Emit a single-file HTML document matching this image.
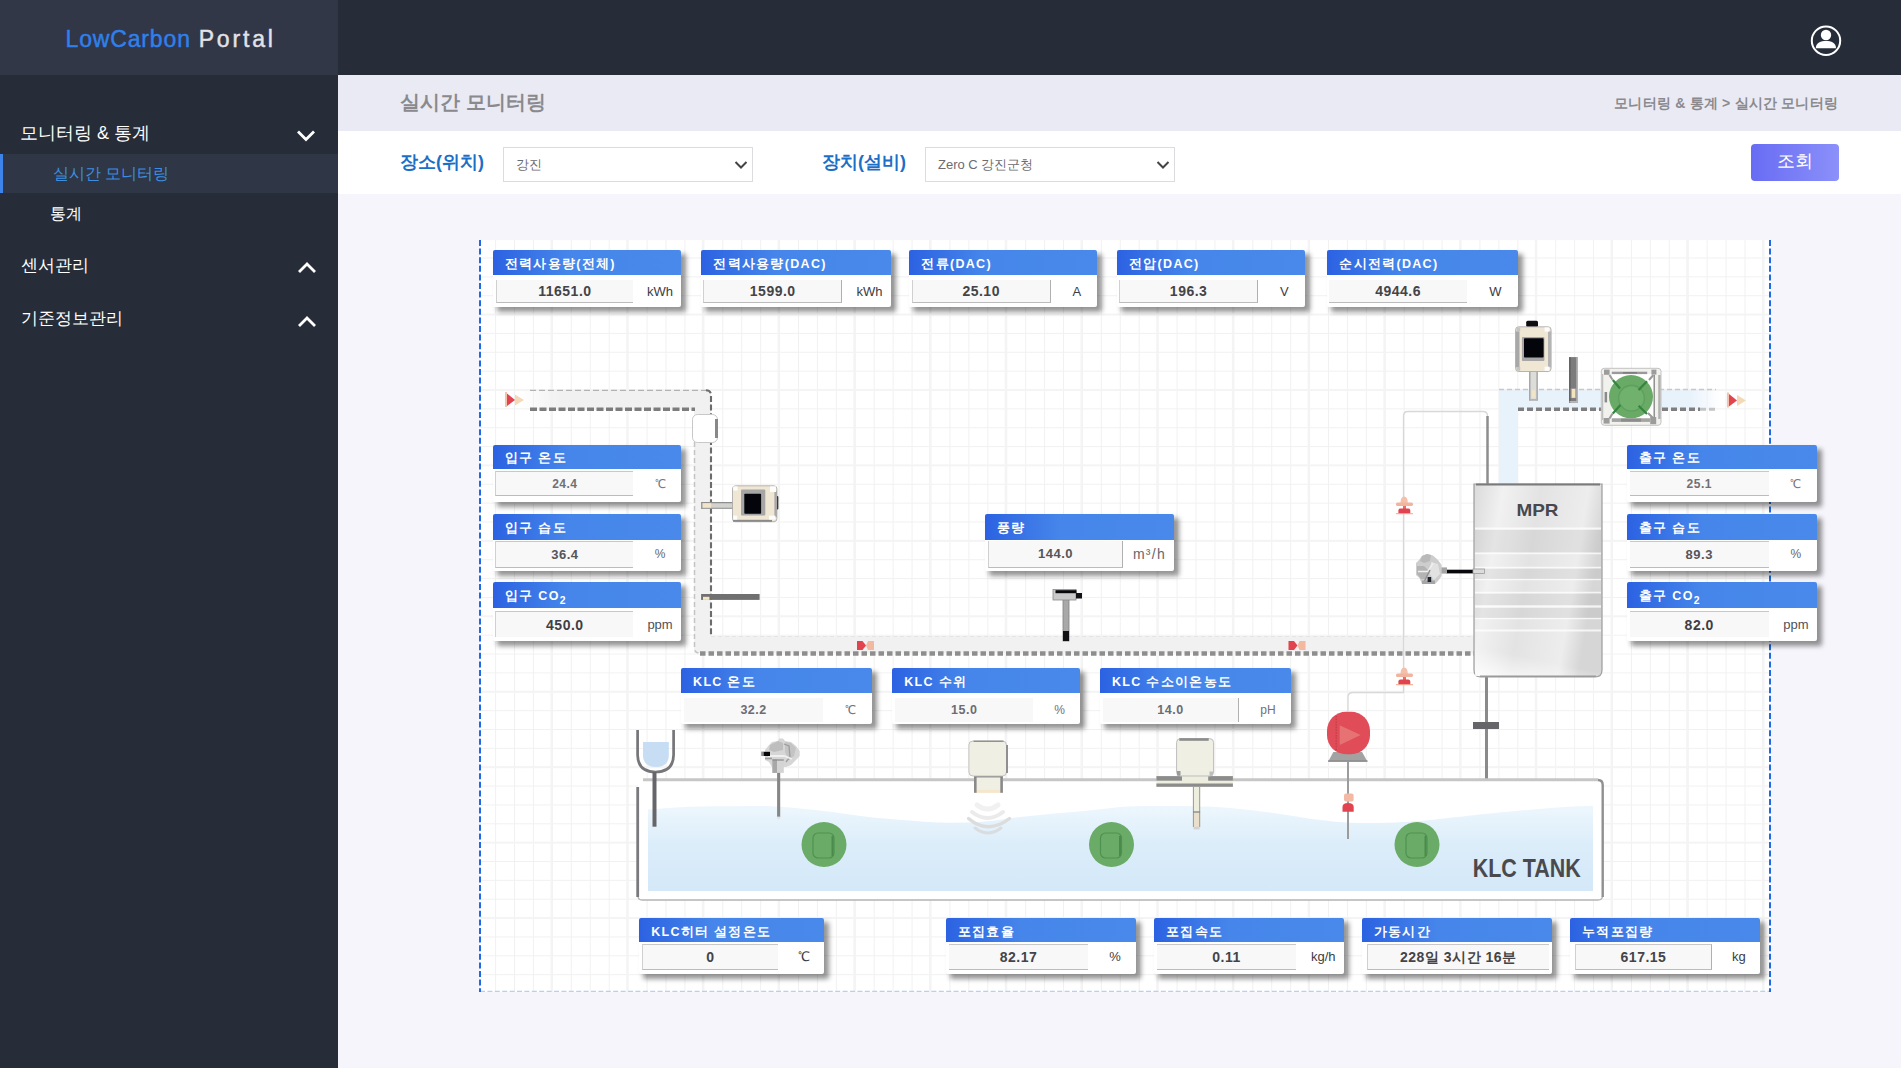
<!DOCTYPE html>
<html lang="ko"><head><meta charset="utf-8"><title>LowCarbon Portal</title>
<style>
*{box-sizing:border-box;margin:0;padding:0}
html,body{width:1901px;height:1068px;overflow:hidden;background:#f5f5fb;font-family:"Liberation Sans",sans-serif;}
.abs{position:absolute}
#side{position:absolute;left:0;top:0;width:338px;height:1068px;background:#262c38}
#logo{position:absolute;left:0;top:0;width:338px;height:75px;background:#313747}
#logo .t{position:absolute;left:65.5px;top:24px;font-size:23px;line-height:30px;letter-spacing:0.85px;color:#2f80ec;white-space:nowrap;-webkit-text-stroke:0.45px #2f80ec}
#logo .t b{font-weight:normal;color:#e2e2e8;letter-spacing:2.85px;margin-left:0.6px;-webkit-text-stroke:0.45px #e2e2e8}
#top{position:absolute;left:338px;top:0;width:1563px;height:75px;background:#262c38}
.mi{position:absolute;left:0;width:338px;color:#fff;font-size:18px;line-height:24px;white-space:nowrap}
.mi span{position:absolute;left:20px;top:0}
.mi svg{position:absolute;left:296px;top:8px}
.mi svg.up{top:7.5px;left:296.6px}
.sub{position:absolute;left:0;width:338px;height:39px;color:#fff;font-size:16px;line-height:39px;padding-left:52px}
.sub.on{background:#2f3645;border-left:3px solid #3d83ea;color:#3d8ee0;padding-left:50px}
#title{position:absolute;left:338px;top:75px;width:1563px;height:56px;background:#eaeaf4}
#title h1{position:absolute;left:62px;top:13px;font-size:20px;line-height:28px;color:#8a8a8e;font-weight:bold;letter-spacing:0}
#title .bc{position:absolute;right:63px;top:18px;font-size:14px;line-height:20px;color:#8a8a8e;font-weight:bold;letter-spacing:0.2px}
#filt{position:absolute;left:338px;top:131px;width:1563px;height:63px;background:#fff}
.lab{position:absolute;top:19px;font-size:18px;line-height:24px;font-weight:bold;color:#1c6fc7;white-space:nowrap}
.sel{position:absolute;top:16px;width:250px;height:35px;border:1px solid #dcdce0;background:#fff;font-size:13px;line-height:33px;color:#6b6b70;padding-left:12px}
.sel svg{position:absolute;right:3px;top:12px}
#btn{position:absolute;left:1413px;top:13px;width:88px;height:37px;border-radius:4px;background:linear-gradient(90deg,#686cf3,#8b90fa);color:#fff;font-size:18px;line-height:34px;text-align:center}
#dia{position:absolute;left:480px;top:240px;width:1291px;height:752px;background:#fff;overflow:hidden}
.card{position:absolute;background:#fff;border-radius:2px;box-shadow:4.5px 4.5px 5px rgba(0,0,0,.42)}
.card .h{position:absolute;left:0;top:0;right:0;background:linear-gradient(90deg,#2c62e2,#4686ea 40%,#4889ea);color:#fff;font-size:12.5px;letter-spacing:1.3px;font-weight:bold;padding-left:12px;white-space:nowrap;border-radius:2px 2px 0 0;overflow:hidden}
.card .v{position:absolute;background:#f8f8f8;font-size:14px;font-weight:bold;color:#46464a;text-align:center;letter-spacing:0.5px}
.card .u{position:absolute;font-size:13px;color:#3c3c44;text-align:center;padding-left:5px}
</style></head><body>
<div id="side">
 <div id="logo"><div class="t">LowCarbon <b>Portal</b></div></div>
 <div class="mi" style="top:121px"><span>모니터링 &amp; 통계</span><svg width="20" height="14" viewBox="0 0 20 14"><path d="M2 2.5 L10 10.5 L18 2.5" fill="none" stroke="#fff" stroke-width="2.8"/></svg></div>
 <div class="sub on" style="top:154px">실시간 모니터링</div>
 <div class="sub" style="top:194px;padding-left:50px">통계</div>
 <div class="mi" style="top:253px;font-size:17.4px"><span style="left:20.6px">센서관리</span><svg class="up" width="20" height="14" viewBox="0 0 20 14"><path d="M2 11 L10 3 L18 11" fill="none" stroke="#fff" stroke-width="2.8"/></svg></div>
 <div class="mi" style="top:306px;font-size:17.4px"><span style="left:20.6px">기준정보관리</span><svg class="up" style="top:9px" width="20" height="14" viewBox="0 0 20 14"><path d="M2 11 L10 3 L18 11" fill="none" stroke="#fff" stroke-width="2.8"/></svg></div>
</div>
<div id="top">
 <svg class="abs" style="left:1471px;top:23px" width="34" height="34" viewBox="0 0 34 34"><circle cx="17" cy="17.7" r="14.2" fill="none" stroke="#fff" stroke-width="2"/><circle cx="17" cy="12" r="5.2" fill="#fff"/><path d="M6.8 25.3 C6.8 19.5 12 18 17 18 C22 18 27 19.5 27 25.3 Z" fill="#fff"/></svg>
</div>
<div id="title"><h1>실시간 모니터링</h1><div class="bc">모니터링 &amp; 통계 &gt; 실시간 모니터링</div></div>
<div id="filt">
 <div class="lab" style="left:62px">장소(위치)</div>
 <div class="sel" style="left:165px">강진<svg width="16" height="10" viewBox="0 0 16 10"><path d="M2.5 2 L8 7.5 L13.5 2" fill="none" stroke="#444" stroke-width="2"/></svg></div>
 <div class="lab" style="left:484px">장치(설비)</div>
 <div class="sel" style="left:587px">Zero C 강진군청<svg width="16" height="10" viewBox="0 0 16 10"><path d="M2.5 2 L8 7.5 L13.5 2" fill="none" stroke="#444" stroke-width="2"/></svg></div>
 <div id="btn">조회</div>
</div>
<div id="dia"></div>
<svg class="abs" style="left:0;top:0" width="1901" height="1068" viewBox="0 0 1901 1068">
<defs>
 <pattern id="gmin" x="476.17" y="238.62" width="18.93" height="18.86" patternUnits="userSpaceOnUse"><path d="M0.5 0 V18.95 M0 0.5 H18.95" stroke="#f1f1f1" stroke-width="1" fill="none"/></pattern>
 <pattern id="gmaj" x="474.7" y="238.1" width="75.72" height="75.44" patternUnits="userSpaceOnUse"><path d="M1 0 V75.8 M0 1 H75.8" stroke="#f4f4f4" stroke-width="2" fill="none"/></pattern>
 <linearGradient id="mprg" x1="0" y1="0" x2="1" y2="0.25"><stop offset="0" stop-color="#dadada"/><stop offset="0.22" stop-color="#f1f1f1"/><stop offset="0.5" stop-color="#e3e3e3"/><stop offset="0.85" stop-color="#ededed"/><stop offset="1" stop-color="#d6d6d6"/></linearGradient><linearGradient id="mprb" x1="0" y1="1" x2="0.6" y2="0"><stop offset="0" stop-color="#fff" stop-opacity="0.85"/><stop offset="0.5" stop-color="#fff" stop-opacity="0"/></linearGradient>
 <linearGradient id="water" x1="0" y1="0" x2="0" y2="1"><stop offset="0" stop-color="#edf7fd"/><stop offset="0.45" stop-color="#dcedfa"/><stop offset="1" stop-color="#d4e8f8"/></linearGradient>
 <linearGradient id="fadeL" x1="0" y1="0" x2="1" y2="0"><stop offset="0" stop-color="#f1f1f1" stop-opacity="0"/><stop offset="1" stop-color="#f1f1f1"/></linearGradient>
 <linearGradient id="fadeR" x1="0" y1="0" x2="1" y2="0"><stop offset="0" stop-color="#e8f2fb"/><stop offset="1" stop-color="#e8f2fb" stop-opacity="0"/></linearGradient>
 <clipPath id="dclip"><rect x="480" y="240" width="1291" height="752"/></clipPath>
</defs>
<g id="grid">
 <rect x="480" y="240" width="1291" height="752" fill="#fff"/>
 <rect x="480" y="240" width="1291" height="752" fill="url(#gmin)"/>
 <rect x="480" y="240" width="1291" height="752" fill="url(#gmaj)"/>
 <path d="M480 991.4 H1771" stroke="#aed3f6" stroke-width="1.3" stroke-dasharray="5 2.4" fill="none"/>
 <path d="M480 240 V992 M1770 240 V992" stroke="#1f68e6" stroke-width="2" stroke-dasharray="6 2.6" fill="none"/>
</g>

<!-- inlet duct -->
<g id="inlet">
 <rect x="520" y="390" width="40" height="20" fill="url(#fadeL)"/>
 <path d="M560 390 H711 V636 H1474 V653 H694 V410 H560 Z" fill="#f1f1f1"/>
 <path d="M530 390.3 H706" fill="none" stroke="#b2b2b2" stroke-width="1.3" stroke-dasharray="6 3"/><path d="M706 390.3 Q711 390.5 711 395 V636" fill="none" stroke="#6c6c6c" stroke-width="2.1" stroke-dasharray="6 2.6"/>
 <path d="M711 636.5 H1474" fill="none" stroke="#e4e4e4" stroke-width="1" stroke-dasharray="4 3"/>
 <path d="M530 409.3 H695" fill="none" stroke="#7c7c7c" stroke-width="3.6" stroke-dasharray="7 2.5"/>
 <path d="M694.5 442 V648 Q694.5 653 700 653" fill="none" stroke="#c4c4c4" stroke-width="1.5" stroke-dasharray="5 3"/>
 <path d="M700 653.5 H1474" fill="none" stroke="#8e8e8e" stroke-width="4.6" stroke-dasharray="5.5 3"/>
 <!-- filter box -->
 <rect x="692.5" y="414.5" width="25" height="28" rx="5" fill="#fff" stroke="#c8c8c8" stroke-width="1"/>
 <path d="M716.5 419 V438" stroke="#888" stroke-width="3" fill="none"/>
 <!-- arrows -->
 <g id="arr1"><rect x="505" y="392" width="2" height="15" fill="#f3c3ae"/><path d="M507 393.5 L515 400 L507 406 Z" fill="#e2444f"/><path d="M515 394.5 L524 400 L515 405.5 Z" fill="#f4d9b9"/></g><g id="arr2"><path d="M857 641 H862.5 L866 645.5 L862.5 650 H857 Z" fill="#e2444f"/><path d="M866 645.5 L868 641 H874 V650 H868 Z" fill="#f2b8a0"/></g>
 <use href="#arr2" x="431.5" y="0"/>
</g>

<!-- outlet duct -->
<g id="outlet">
 <path d="M1499 389 H1690 V410 H1518 V484 H1499 Z" fill="#e8f2fb"/>
 <rect x="1690" y="389" width="30" height="21" fill="url(#fadeR)"/>
 <path d="M1499 389.5 H1716" fill="none" stroke="#c8c8c8" stroke-width="1.5" stroke-dasharray="5 3"/>
 <path d="M1518 409.3 H1700" fill="none" stroke="#7e7e7e" stroke-width="3.4" stroke-dasharray="6 3"/><path d="M1700 409.3 H1716" fill="none" stroke="#c4c4c4" stroke-width="3" stroke-dasharray="6 3"/>
 <use href="#arr1" x="1222" y="0.5"/>
</g>

<!-- thin pipes -->
<g id="pipes" fill="none">
 <path d="M1348 711 V697 Q1348 692.5 1353 692.5 H1403.5 V416 Q1403.5 411.5 1408 411.5 H1483 Q1487.5 411.5 1487.5 416" stroke="#d8d8d8" stroke-width="1.3"/>
 <path d="M1487.5 416 V484" stroke="#8e8e8e" stroke-width="2.5"/>
 <path d="M1486.5 677 V780" stroke="#8a8a8a" stroke-width="3"/>
 <rect x="1473" y="722" width="26" height="7" fill="#66666a" stroke="none"/>
</g>

<!-- MPR -->
<g id="mpr">
 <path d="M1474 484 H1602 V670 Q1602 677 1595 677 H1481 Q1474 677 1474 670 Z" fill="url(#mprg)" stroke="#9c9c9c" stroke-width="1.2"/>
 <rect x="1475" y="632" width="126" height="44" fill="url(#mprb)"/>
 <path d="M1476 484.5 H1600" stroke="#7a7a7a" stroke-width="2"/>
 <path d="M1480 676.3 H1596" stroke="#9a9a9a" stroke-width="1.6"/>
 <g stroke="#fff" stroke-opacity="0.75">
  <path d="M1475 528.5 H1601" stroke-width="2"/>
  <path d="M1475 553.5 H1601" stroke-width="1.5"/>
  <path d="M1475 567.5 H1601" stroke-width="1.5"/>
  <path d="M1475 579.5 H1601" stroke-width="1.5"/>
  <path d="M1475 592.5 H1601" stroke-width="1.5"/>
  <path d="M1475 606.5 H1601" stroke-width="2"/>
  <path d="M1475 618.5 H1601" stroke-width="1.5"/>
  <path d="M1475 630.5 H1601" stroke-width="2"/>
 </g>
 <g fill="#000" fill-opacity="0.05">
  <rect x="1475" y="530" width="126" height="22"/>
  <rect x="1475" y="569" width="126" height="10"/>
  <rect x="1475" y="594" width="126" height="11"/>
  <rect x="1475" y="608" width="126" height="10"/>
 </g>
 <text x="1537.5" y="515.5" font-family="Liberation Sans, sans-serif" font-weight="bold" font-size="17" fill="#48484c" text-anchor="middle" textLength="42" lengthAdjust="spacingAndGlyphs">MPR</text>
</g>

<!-- tank -->
<g id="tank">
 <rect x="638" y="780" width="964.5" height="120" rx="4" fill="#fff"/>
 <path d="M643 779.7 H1598" stroke="#c6c6c6" stroke-width="3" fill="none"/>
 <path d="M638 896 Q638 900 642 900 H1598 Q1602.5 900 1602.5 896" stroke="#b4b4b4" stroke-width="1.3" fill="none"/>
 <path d="M637.7 787 V897" stroke="#7a7a7e" stroke-width="2.8" fill="none"/>
 <path d="M1598 780 Q1602.7 780 1602.7 785 V897" stroke="#909090" stroke-width="2.4" fill="none"/>
 <path d="M648 809.5 C654.2 809.1 673.0 807.5 685 807 C697.0 806.5 705.7 806.4 720 806.3 C734.3 806.2 754.3 805.6 771 806.3 C787.7 807.0 803.7 808.7 820 810.5 C836.3 812.3 853.2 815.2 869 817 C884.8 818.8 901.5 820.0 915 821 C928.5 822.0 938.3 822.7 950 822.8 C961.7 822.9 973.3 822.5 985 821.5 C996.7 820.5 1008.3 818.3 1020 817 C1031.7 815.7 1043.2 814.6 1055 813.5 C1066.8 812.4 1079.0 811.4 1091 810.2 C1103.0 809.1 1114.7 807.3 1127 806.6 C1139.3 805.9 1151.7 806.0 1165 806 C1178.3 806.0 1194.5 806.1 1207 806.6 C1219.5 807.1 1229.5 808.0 1240 809 C1250.5 810.0 1261.7 811.4 1270 812.5 C1278.3 813.6 1281.7 814.2 1290 815.5 C1298.3 816.8 1309.8 818.8 1320 820 C1330.2 821.2 1339.8 822.3 1351 822.8 C1362.2 823.3 1375.5 823.1 1387 822.8 C1398.5 822.5 1409.8 821.8 1420 821 C1430.2 820.2 1436.3 819.2 1448 818 C1459.7 816.8 1475.8 814.9 1490 813.5 C1504.2 812.1 1520.5 810.5 1533 809.4 C1545.5 808.3 1555.0 807.6 1565 807 C1575.0 806.4 1588.3 806.0 1593 805.8 V891 H648 Z" fill="url(#water)"/>
 <text x="1526.7" y="877" font-family="Liberation Sans, sans-serif" font-weight="bold" font-size="26" fill="#4a4a4e" text-anchor="middle" textLength="108" lengthAdjust="spacingAndGlyphs">KLC TANK</text>
</g>

<path d="M1348 762 V839" stroke="#9c9c9c" stroke-width="2" fill="none"/>
<!-- green fans in tank -->
<g id="greens">
 <g id="gc"><circle cx="824" cy="844.5" r="22.5" fill="#6aab68"/><rect x="813" y="833" width="21" height="25" rx="5" fill="none" stroke="#4f9150" stroke-width="1.2"/><path d="M832.5 836 V856" stroke="#4a8a4c" stroke-width="2"/></g>
 <use href="#gc" x="287.5" y="0"/>
 <use href="#gc" x="593" y="0"/>
</g>

<!-- big fan outlet -->
<g id="fan">
 <rect x="1601.3" y="368.3" width="59.7" height="57" rx="3" fill="#f1f1ed" stroke="#bcbcbc" stroke-width="0.9"/>
 <rect x="1611.8" y="374" width="41.6" height="44.3" fill="#fff"/>
 <rect x="1611.8" y="371.7" width="35.4" height="2.4" fill="#9a9a9a"/>
 <rect x="1623" y="372" width="14" height="1.6" fill="#7e7e7e"/>
 <rect x="1611.8" y="418.3" width="38.2" height="3.6" fill="#a4a4a4"/>
 <rect x="1621" y="418.6" width="20" height="3" fill="#8c8c8c"/>
 <rect x="1602.2" y="374" width="1" height="46" fill="#b4b4b4"/>
 <rect x="1604.6" y="392" width="2.5" height="10.4" fill="#8a8a8a"/>
 <rect x="1653.6" y="375" width="1.2" height="44" fill="#7c7c7c"/>
 <rect x="1658.2" y="375" width="2.4" height="44" fill="#b2b2b2"/>
 <rect x="1604" y="369.6" width="5.6" height="5.2" fill="#9c9c9c"/><rect x="1651.4" y="369.6" width="5" height="5" fill="#9c9c9c"/>
 <rect x="1603.6" y="418" width="6" height="5.6" fill="#9c9c9c"/><rect x="1650.2" y="417" width="6" height="7.2" fill="#9c9c9c"/>
 <path d="M1609.5 375 L1612.6 379.7 M1653.4 375 L1649 380 M1609.5 418.6 L1612.6 413.4 M1653 418 L1648 413" stroke="#9a9a9a" stroke-width="2"/>
 <ellipse cx="1631" cy="396.7" rx="22" ry="21.6" fill="#69aa67"/>
 <circle cx="1631.5" cy="398.2" r="13.6" fill="#5fa05e"/>
 <circle cx="1631.5" cy="398.3" r="12.1" fill="#6fb16d"/>
 <path d="M1612.8 380 L1620 388.4 M1638.6 390 L1647 381.2 M1612.8 413.4 L1620.4 405 M1638.6 405.8 L1647 414" stroke="#35853f" stroke-width="2.3"/>
</g>

<!-- outlet sensor (vertical) -->
<g id="sens1">
 <rect x="1526.2" y="320.7" width="11.8" height="6.3" rx="1.5" fill="#0e0e12"/>
 <rect x="1529.2" y="371" width="8.5" height="29.7" fill="#dcdcd8"/>
 <path d="M1529.8 371 V400.7 M1537.1 371 V400.7" stroke="#9a9a9a" stroke-width="1.2" fill="none"/>
 <rect x="1531.8" y="390.3" width="3.6" height="7.5" fill="#f1e4c8"/>
 <rect x="1530" y="399" width="7" height="1.8" fill="#b4b4b4"/>
 <rect x="1515.6" y="326.8" width="35.5" height="44.7" rx="3" fill="#efe6d4" stroke="#a4a4a4" stroke-width="0.8"/>
 <rect x="1515.6" y="331.3" width="3.9" height="36" fill="#a8a8a8"/>
 <rect x="1548" y="331.3" width="3.1" height="36" fill="#b4b4b4"/>
 <rect x="1544.6" y="327.4" width="4.8" height="4.2" fill="#fdfdfd"/><rect x="1544.6" y="366.6" width="4.8" height="4.2" fill="#fdfdfd"/>
 <rect x="1516.6" y="327.4" width="3.6" height="3.8" fill="#c4c4c4"/><rect x="1516.6" y="367" width="3.6" height="3.8" fill="#c4c4c4"/>
 <rect x="1521.9" y="337" width="22.5" height="24" rx="1" fill="#a6a6a6"/>
 <rect x="1524" y="338.2" width="19.6" height="19.4" rx="0.8" fill="#03050b"/>
</g>
<!-- outlet probe -->
<g id="probe1">
 <rect x="1569.1" y="357.1" width="8.9" height="45.6" fill="#7c7c7c"/>
 <rect x="1569.1" y="357.1" width="1.6" height="45.6" fill="#626262"/>
 <rect x="1576.3" y="357.1" width="1.7" height="45.6" fill="#b2b2b2"/>
 <rect x="1570.7" y="388.5" width="5.6" height="9.6" fill="#a8a8a8"/>
 <rect x="1571.9" y="388.9" width="3.2" height="8.9" fill="#f5e3bc"/>
 <rect x="1569.6" y="401" width="8" height="1.7" fill="#b8b8b8"/>
</g>

<!-- inlet sensor (horizontal) -->
<g id="sens2">
 <rect x="701.2" y="502.2" width="32" height="6.5" fill="#d2d2ce"/>
 <path d="M701.2 502.6 H733 M701.2 508.2 H733" stroke="#8e8e8e" stroke-width="1.1" fill="none"/>
 <rect x="701.6" y="503.2" width="9.5" height="4.4" fill="#f1e4c8"/>
 <rect x="701.2" y="502.2" width="1.2" height="6.5" fill="#8e8e8e"/>
 <rect x="776" y="496" width="2.3" height="13.5" rx="1" fill="#0e0e12"/>
 <rect x="732.5" y="485.8" width="44.4" height="35.9" rx="3" fill="#efe6d4" stroke="#a4a4a4" stroke-width="0.8"/>
 <rect x="733" y="519.8" width="39" height="2" fill="#8a8a8a"/>
 <rect x="774.4" y="491" width="2.5" height="26" fill="#a8a8a8"/>
 <rect x="733.2" y="486.4" width="4.4" height="4.2" fill="#fdfdfd"/><rect x="770" y="486.4" width="6" height="5.6" fill="#fdfdfd"/>
 <rect x="733.2" y="515.6" width="4" height="4" fill="#fdfdfd"/><rect x="769" y="515.6" width="6.4" height="4" fill="#fdfdfd"/>
 <rect x="741" y="489.4" width="24.3" height="26.2" rx="1" fill="#a6a6a6"/>
 <rect x="744.3" y="493.7" width="16.8" height="20.1" rx="0.8" fill="#03050b"/>
</g>
<!-- inlet probe horizontal -->
<g id="probe2">
 <rect x="701.1" y="594" width="58.5" height="5.9" fill="#707070"/>
 <rect x="703" y="596.8" width="6.4" height="3.1" fill="#f3e3c0"/>
</g>

<!-- flow meter -->
<g id="flow">
 <rect x="1063" y="599" width="6" height="42" fill="#a8a8a8" stroke="#808080" stroke-width="0.8"/>
 <rect x="1063" y="631" width="6" height="10" fill="#121216"/>
 <rect x="1053" y="589.5" width="23" height="10.5" fill="#c9c9c9" stroke="#8a8a8a" stroke-width="0.8"/>
 <rect x="1055.5" y="590.2" width="21" height="3" fill="#08080c"/>
 <rect x="1076" y="593" width="6" height="5.5" fill="#121216"/>
</g>

<!-- MPR thermometer -->
<g id="therm1">
 <rect x="1446.5" y="569.7" width="27" height="3.7" fill="#08080c"/>
 <rect x="1473" y="569" width="11.6" height="4.6" fill="#dcdcdc" stroke="#9c9c9c" stroke-width="0.8"/>
 <rect x="1440.5" y="567.4" width="6.5" height="6.2" fill="#a4a4a4"/>
 <path d="M1422 556 L1427 554 L1433 555.5 L1438 560 L1441.6 565 L1441.6 576 L1438 581 L1435 584 L1422 584 L1419.5 578 L1416 575 L1416 563 L1419 560 Z" fill="#cdcdcd"/>
 <path d="M1422 556 L1427 554 L1431 555 L1430 561 L1424 563 L1420 561 Z" fill="#b9b9b9"/>
 <path d="M1431 562 L1438 564 L1440 574 L1434 580 L1430 574 Z" fill="#e2e2e2"/>
 <path d="M1417 566 L1424 566 L1429 571 L1426 579 L1421 579 L1417 574 Z" fill="#b4b4b4"/>
 <path d="M1418 571.5 H1428 L1433 563" stroke="#eeeeee" stroke-width="1.6" fill="none"/>
 <path d="M1424 582 L1430 570" stroke="#8f8f8f" stroke-width="1.4" fill="none"/>
 <rect x="1422" y="580.5" width="13" height="3.5" fill="#a6a6a6"/>
 <rect x="1427.6" y="577" width="3.6" height="5" fill="#1e2430"/>
</g>

<!-- tank thermometer -->
<g id="therm2">
 <rect x="777.1" y="772" width="3.1" height="45" fill="#868686"/>
 <rect x="777.1" y="816.6" width="3.1" height="2.6" fill="#e4e4e4"/>
 <path d="M765 750 L769 745 L772 742 L778 741 L779 738.5 L783 738.5 L785 741 L791 742 L796 746 L799.7 751 L799.7 756 L796 760 L791 765 L786 767 L772 767 L769 762 L765 760 Z" fill="#d6d6d6"/>
 <path d="M770 745 L778 741 L783 743 L783 750 L774 752 L769 750 Z" fill="#bebebe"/>
 <path d="M785 742 L791 743 L796 748 L794 756 L789 760 L785 752 Z" fill="#c4c4c4"/>
 <path d="M784 744 L789 746 L790 757 L786 762" stroke="#9c9c9c" stroke-width="1.3" fill="none"/>
 <path d="M768 756 H784 L792 759" stroke="#f0f0f0" stroke-width="1.8" fill="none"/>
 <path d="M765 758.5 H772" stroke="#9a9a9a" stroke-width="1.6" fill="none"/>
 <rect x="761.2" y="751.6" width="3" height="4.4" fill="#8c8c8c"/>
 <rect x="763.8" y="751.8" width="6.2" height="4.2" fill="#06060a"/>
 <rect x="772.4" y="759.5" width="11.4" height="13.4" fill="#d4d4d4"/>
 <rect x="772.4" y="759.5" width="4.6" height="13.4" fill="#a8a8a8"/>
 <path d="M772.4 760 H783.8" stroke="#8a8a8a" stroke-width="1.2"/>
</g>

<!-- funnel -->
<g id="funnel">
 <path d="M643 742 H668.8 V755 Q668.8 766.8 656 767 Q643 766.8 643 755 Z" fill="#c6ddf3"/>
 <path d="M637.6 730 V755 Q638 772 655.5 772 Q673.2 772 673.6 755 V730" fill="none" stroke="#76767a" stroke-width="2.7"/>
 <path d="M654.5 772 V826.7" stroke="#66666a" stroke-width="4" fill="none"/>
</g>

<!-- level sensor -->
<g id="level">
 <rect x="974" y="775.5" width="28.9" height="17.3" fill="#f0efe4"/>
 <rect x="976" y="789.8" width="25" height="3" fill="#f5e6cc"/>
 <rect x="974" y="775.8" width="2.6" height="17" fill="#8a8a8a"/><rect x="1000.3" y="775.8" width="2.6" height="17" fill="#8a8a8a"/>
 <rect x="974" y="775.6" width="28.9" height="1.8" fill="#7e7e7e"/>
 <rect x="968.9" y="741" width="37.6" height="35" rx="4" fill="#f0efe4" stroke="#c2c2c2" stroke-width="1"/>
 <rect x="973.5" y="740.6" width="30" height="1.3" fill="#8a8a8a"/>
 <rect x="1006" y="745" width="2" height="28" fill="#909090"/>
 <g fill="none" stroke-linecap="round">
  <path d="M977 805 Q987.5 813 998 805" stroke="#f1f1f1" stroke-width="5"/>
  <path d="M972 812 Q987.5 824 1003 812" stroke="#ebebeb" stroke-width="4"/>
  <path d="M968.5 818.5 Q988 835 1009.5 818.5" stroke="#dcdcdc" stroke-width="3.4"/>
  <path d="M975 828 Q988 838 1001 828" stroke="#dadde0" stroke-width="3"/>
 </g>
</g>

<!-- pH sensor -->
<g id="ph">
 <rect x="1193" y="786" width="7.1" height="41" fill="#eeeedf"/>
 <rect x="1193" y="812.5" width="7.1" height="14.5" fill="#e9dfcb"/>
 <path d="M1193.4 786 V827 M1199.7 786 V827" stroke="#8e8e8e" stroke-width="0.9" fill="none"/>
 <path d="M1193 812 H1200.1" stroke="#8a8a8a" stroke-width="1.4"/>
 <rect x="1193.6" y="826.8" width="6" height="2.6" fill="#d2d2d2"/>
 <rect x="1156.4" y="776.1" width="76.5" height="10.7" fill="#eeeedf"/>
 <rect x="1156.4" y="776.1" width="25.6" height="4.6" fill="#8c8c8c"/>
 <rect x="1208.2" y="776.1" width="24.7" height="4.6" fill="#8c8c8c"/>
 <rect x="1156.4" y="783.5" width="76.5" height="3.3" fill="#8c8c8c"/>
 <rect x="1176.6" y="738.6" width="37" height="37.4" rx="4" fill="#f0efe4" stroke="#bdbdbd" stroke-width="1"/>
 <rect x="1179.3" y="738.2" width="29.4" height="2.6" fill="#8c8c8c"/>
 <rect x="1177" y="771" width="3.5" height="4.6" fill="#9a9a9a"/><rect x="1209.5" y="771.5" width="3.5" height="4" fill="#bdbdbd"/>
</g>

<!-- red pump -->
<g id="pump">
 <path d="M1333.3 752 H1362.1 L1367.5 761.8 H1328.1 Z" fill="#a2a2a2"/>
 <path d="M1328.1 761 H1367.5" stroke="#8c8c8c" stroke-width="1.6"/>
 <rect x="1327" y="711.8" width="43" height="42.4" rx="19" fill="#e04c57"/>
 <path d="M1336.2 716 V751" stroke="#c23c48" stroke-width="1.2" stroke-dasharray="1.5 1.2"/>
 <path d="M1339.7 725.3 L1360.7 735.1 L1339.7 745 Z" fill="#f3b0a4" fill-opacity="0.38"/>
</g>

<!-- red alarm icons -->
<g id="alarm1"><path d="M1400.5 503 Q1400.5 496.5 1404.2 496.5 Q1407.8 496.5 1407.8 503 Z" fill="#f4c0aa"/><rect x="1396" y="502.5" width="17" height="3.6" rx="1.6" fill="#f2b49e"/><rect x="1403" y="506" width="3" height="3" fill="#ea6a66"/><path d="M1398.4 513.4 V510.5 Q1398.4 508.6 1400.5 508.6 H1408.2 Q1410.3 508.6 1410.3 510.5 V513.4 Z" fill="#e2444f"/><rect x="1396" y="513.2" width="17" height="1" fill="#f1a58a"/></g>
<use href="#alarm1" x="0" y="171"/>
<g id="alarm3"><rect x="1344" y="793.4" width="9.6" height="8" rx="2" fill="#f3b9a4"/><path d="M1342.5 811.8 V807 Q1342.5 803 1348 803 Q1353.7 803 1353.7 807 V811.8 Z" fill="#e2444f"/></g>
</svg>

<div class="card" style="left:492.8px;top:250.0px;width:188.2px;height:57.1px"><div class="h" style="height:24.5px;line-height:28.5px">전력사용량(전체)</div><div class="v" style="left:2.8px;top:29.6px;width:137.6px;height:23.6px;line-height:23.6px;font-size:14px;color:#444448;border-left:1px solid #d0d0d0;border-bottom:1.5px solid #bcbcbc;">11651.0</div><div class="u" style="left:141.4px;top:29.6px;width:46.8px;height:23.6px;line-height:24.6px;font-size:13px;color:#3c3c44">kWh</div></div><div class="card" style="left:701.3px;top:250.0px;width:189.5px;height:57.1px"><div class="h" style="height:24.5px;line-height:28.5px">전력사용량(DAC)</div><div class="v" style="left:2.1px;top:29.6px;width:138.7px;height:23.6px;line-height:23.6px;font-size:14px;color:#444448;border-left:1px solid #d0d0d0;border-bottom:1.5px solid #bcbcbc;border-right:1.5px solid #b0b0b0;">1599.0</div><div class="u" style="left:141.8px;top:29.6px;width:47.7px;height:23.6px;line-height:24.6px;font-size:13px;color:#3c3c44">kWh</div></div><div class="card" style="left:909.4px;top:250.0px;width:187.8px;height:57.1px"><div class="h" style="height:24.5px;line-height:28.5px">전류(DAC)</div><div class="v" style="left:2.4px;top:29.6px;width:138.8px;height:23.6px;line-height:23.6px;font-size:14px;color:#444448;border-left:1px solid #d0d0d0;border-bottom:1.5px solid #bcbcbc;border-right:1.5px solid #b0b0b0;">25.10</div><div class="u" style="left:142.2px;top:29.6px;width:45.6px;height:23.6px;line-height:24.6px;font-size:13px;color:#3c3c44">A</div></div><div class="card" style="left:1117px;top:250.0px;width:187.8px;height:57.1px"><div class="h" style="height:24.5px;line-height:28.5px">전압(DAC)</div><div class="v" style="left:2.3px;top:29.6px;width:138.7px;height:23.6px;line-height:23.6px;font-size:14px;color:#444448;border-left:1px solid #d0d0d0;border-bottom:1.5px solid #bcbcbc;border-right:1.5px solid #b0b0b0;">196.3</div><div class="u" style="left:142.0px;top:29.6px;width:45.8px;height:23.6px;line-height:24.6px;font-size:13px;color:#3c3c44">V</div></div><div class="card" style="left:1327.3px;top:250.0px;width:190.6px;height:57.1px"><div class="h" style="height:24.5px;line-height:28.5px">순시전력(DAC)</div><div class="v" style="left:2.2px;top:29.6px;width:137.3px;height:23.6px;line-height:23.6px;font-size:14px;color:#444448;border-bottom:1.5px solid #bcbcbc;">4944.6</div><div class="u" style="left:140.5px;top:29.6px;width:50.1px;height:23.6px;line-height:24.6px;font-size:13px;color:#3c3c44">W</div></div><div class="card" style="left:493px;top:445.0px;width:187.8px;height:56.7px"><div class="h" style="height:23.7px;line-height:27.7px">입구 온도</div><div class="v" style="left:2.4px;top:26.2px;width:137.9px;height:25.2px;line-height:25.2px;font-size:12px;color:#707074;border-left:1px solid #d0d0d0;border-bottom:1.5px solid #bcbcbc;border-top:1.5px solid #c8c8c8;">24.4</div><div class="u" style="left:141.3px;top:26.2px;width:46.5px;height:25.2px;line-height:26.2px;font-size:11.5px;color:#77777c">℃</div></div><div class="card" style="left:493px;top:514.1px;width:187.8px;height:57.1px"><div class="h" style="height:25.7px;line-height:29.7px">입구 습도</div><div class="v" style="left:2.4px;top:27.1px;width:137.9px;height:26.4px;line-height:26.4px;font-size:13px;color:#55555a;border-left:1px solid #d0d0d0;border-bottom:1.5px solid #bcbcbc;border-top:1.5px solid #c8c8c8;">36.4</div><div class="u" style="left:141.3px;top:27.1px;width:46.5px;height:26.4px;line-height:27.4px;font-size:12px;color:#66666c">%</div></div><div class="card" style="left:493px;top:582.3px;width:187.8px;height:58.5px"><div class="h" style="height:25.4px;line-height:29.4px">입구 CO<sub>2</sub></div><div class="v" style="left:2.4px;top:29.0px;width:137.9px;height:26.1px;line-height:26.1px;font-size:14px;color:#3e3e46;border-left:1px solid #d0d0d0;border-top:1.5px solid #c8c8c8;">450.0</div><div class="u" style="left:141.3px;top:29.0px;width:46.5px;height:26.1px;line-height:27.1px;font-size:13px;color:#50505a">ppm</div></div><div class="card" style="left:985px;top:514.1px;width:189px;height:57.1px"><div class="h" style="height:25.7px;line-height:29.7px">풍량</div><div class="v" style="left:3px;top:27.1px;width:135px;height:26.4px;line-height:26.4px;font-size:13px;color:#55555a;border-left:1px solid #d0d0d0;border-bottom:1.5px solid #bcbcbc;border-right:1.5px solid #b0b0b0;">144.0</div><div class="u" style="left:139.0px;top:27.1px;width:50.0px;height:26.4px;line-height:27.4px;font-size:12px;color:#66666c"><span style="font-size:14px;letter-spacing:1.3px;margin-left:-4px">m³/h</span></div></div><div class="card" style="left:1627px;top:445.0px;width:190px;height:56.7px"><div class="h" style="height:23.7px;line-height:27.7px">출구 온도</div><div class="v" style="left:2.6px;top:26.2px;width:139.3px;height:25.2px;line-height:25.2px;font-size:12px;color:#707074;border-bottom:1.5px solid #bcbcbc;border-top:1.5px solid #c8c8c8;">25.1</div><div class="u" style="left:142.9px;top:26.2px;width:47.1px;height:25.2px;line-height:26.2px;font-size:11.5px;color:#77777c">℃</div></div><div class="card" style="left:1627px;top:514.1px;width:190px;height:57.1px"><div class="h" style="height:25.7px;line-height:29.7px">출구 습도</div><div class="v" style="left:2.6px;top:27.1px;width:139.3px;height:26.4px;line-height:26.4px;font-size:13px;color:#55555a;border-bottom:1.5px solid #bcbcbc;border-top:1.5px solid #c8c8c8;">89.3</div><div class="u" style="left:142.9px;top:27.1px;width:47.1px;height:26.4px;line-height:27.4px;font-size:12px;color:#66666c">%</div></div><div class="card" style="left:1627px;top:582.3px;width:190px;height:58.5px"><div class="h" style="height:25.4px;line-height:29.4px">출구 CO<sub>2</sub></div><div class="v" style="left:2.6px;top:29.0px;width:139.3px;height:26.1px;line-height:26.1px;font-size:14px;color:#3e3e46;border-top:1.5px solid #c8c8c8;">82.0</div><div class="u" style="left:142.9px;top:29.0px;width:47.1px;height:26.1px;line-height:27.1px;font-size:13px;color:#50505a">ppm</div></div><div class="card" style="left:681.1px;top:668.2px;width:190.9px;height:55.8px"><div class="h" style="height:24.6px;line-height:28.6px">KLC 온도</div><div class="v" style="left:3px;top:29.8px;width:139px;height:24.0px;line-height:24.0px;font-size:12.5px;color:#6c6c74;">32.2</div><div class="u" style="left:143.0px;top:29.8px;width:47.9px;height:24.0px;line-height:25.0px;font-size:12px;color:#70707a">℃</div></div><div class="card" style="left:892.2px;top:668.2px;width:187.6px;height:55.8px"><div class="h" style="height:24.6px;line-height:28.6px">KLC 수위</div><div class="v" style="left:3px;top:29.8px;width:138px;height:24.0px;line-height:24.0px;font-size:12.5px;color:#6c6c74;">15.0</div><div class="u" style="left:142.0px;top:29.8px;width:45.6px;height:24.0px;line-height:25.0px;font-size:12px;color:#70707a">%</div></div><div class="card" style="left:1100px;top:668.2px;width:191px;height:55.8px"><div class="h" style="height:24.6px;line-height:28.6px">KLC 수소이온농도</div><div class="v" style="left:3px;top:29.8px;width:136px;height:24.0px;line-height:24.0px;font-size:12.5px;color:#6c6c74;border-right:1.5px solid #b0b0b0;">14.0</div><div class="u" style="left:140.0px;top:29.8px;width:51.0px;height:24.0px;line-height:25.0px;font-size:12px;color:#70707a">pH</div></div><div class="card" style="left:639.2px;top:918.2px;width:184.5px;height:55.5px"><div class="h" style="height:24.3px;line-height:28.3px">KLC히터 설정온도</div><div class="v" style="left:2.5px;top:26.1px;width:136.5px;height:25.4px;line-height:25.4px;font-size:14px;color:#444448;border-left:1px solid #d0d0d0;border-bottom:1.5px solid #bcbcbc;border-top:1.5px solid #c8c8c8;">0</div><div class="u" style="left:140.0px;top:26.1px;width:44.5px;height:25.4px;line-height:26.4px;font-size:13px;color:#3c3c44">℃</div></div><div class="card" style="left:945.7px;top:918.2px;width:190.3px;height:55.5px"><div class="h" style="height:24.3px;line-height:28.3px">포집효율</div><div class="v" style="left:3.3px;top:26.1px;width:139px;height:25.4px;line-height:25.4px;font-size:14px;color:#444448;border-bottom:1.5px solid #bcbcbc;border-top:1.5px solid #c8c8c8;">82.17</div><div class="u" style="left:143.3px;top:26.1px;width:47.0px;height:25.4px;line-height:26.4px;font-size:13px;color:#3c3c44">%</div></div><div class="card" style="left:1154px;top:918.2px;width:190.3px;height:55.5px"><div class="h" style="height:24.3px;line-height:28.3px">포집속도</div><div class="v" style="left:2.8px;top:26.1px;width:139.4px;height:25.4px;line-height:25.4px;font-size:14px;color:#444448;border-bottom:1.5px solid #bcbcbc;border-top:1.5px solid #c8c8c8;">0.11</div><div class="u" style="left:143.2px;top:26.1px;width:47.1px;height:25.4px;line-height:26.4px;font-size:13px;color:#3c3c44">kg/h</div></div><div class="card" style="left:1361.8px;top:918.2px;width:190.2px;height:55.5px"><div class="h" style="height:24.3px;line-height:28.3px">가동시간</div><div class="v" style="left:5px;top:26.1px;width:182px;height:25.4px;line-height:25.4px;font-size:14px;color:#444448;border-left:1px solid #d0d0d0;border-bottom:1.5px solid #bcbcbc;border-top:1.5px solid #c8c8c8;">228일 3시간 16분</div></div><div class="card" style="left:1570px;top:918.2px;width:189.9px;height:55.5px"><div class="h" style="height:24.3px;line-height:28.3px">누적포집량</div><div class="v" style="left:5px;top:26.1px;width:137px;height:25.4px;line-height:25.4px;font-size:14px;color:#444448;border-left:1px solid #d0d0d0;border-bottom:1.5px solid #bcbcbc;border-top:1.5px solid #c8c8c8;border-right:1.5px solid #b0b0b0;">617.15</div><div class="u" style="left:143.0px;top:26.1px;width:46.9px;height:25.4px;line-height:26.4px;font-size:13px;color:#3c3c44">kg</div></div>
</body></html>
